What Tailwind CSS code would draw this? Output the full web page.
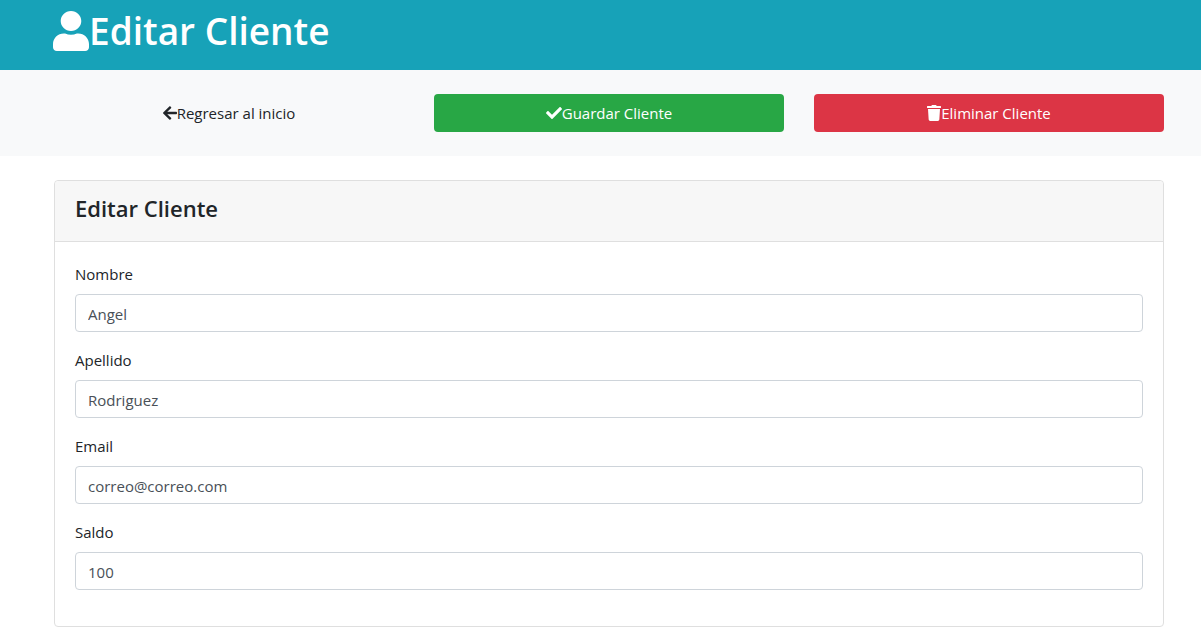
<!DOCTYPE html>
<html lang="es">
<head>
<meta charset="utf-8">
<meta name="viewport" content="width=device-width, initial-scale=1">
<title>Editar Cliente</title>
<script src="https://cdn.jsdelivr.net/npm/@tailwindcss/browser@4"></script>
</head>
<body class="bg-white font-['Open_Sans','Noto_Sans',sans-serif] text-[15px] leading-6 text-[#212529]">
<header class="bg-[#17a2b8] pt-[7px] pb-[15px] pr-[37px] pl-[53px] text-white">
  <h1 class="flex items-center text-[37px] leading-12 font-semibold">
    <svg class="h-10 w-9 shrink-0" viewBox="0 0 448 512" preserveAspectRatio="none" fill="currentColor" aria-hidden="true"><path d="M224 256c70.7 0 128-57.3 128-128S294.7 0 224 0 96 57.3 96 128s57.3 128 128 128zm89.6 32h-16.7c-22.2 10.2-46.9 16-72.9 16s-50.6-5.8-72.9-16h-16.7C60.2 288 0 348.2 0 422.4V464c0 26.5 21.5 48 48 48h352c26.5 0 48-21.5 48-48v-41.6c0-74.2-60.2-134.4-134.4-134.4z"/></svg>
    Editar Cliente
  </h1>
</header>
<form>
  <section class="grid grid-cols-3 gap-[30px] bg-[#f8f9fa] py-6 pr-[37px] pl-[54px]">
    <a href="#" class="flex h-[38px] items-center justify-center rounded">
      <svg class="h-4 w-3.5 shrink-0" viewBox="0 0 448 512" fill="currentColor" aria-hidden="true"><path d="M257.5 445.1l-22.2 22.2c-9.4 9.4-24.6 9.4-33.9 0L7 273c-9.4-9.4-9.4-24.6 0-33.9L201.4 44.7c9.4-9.4 24.6-9.4 33.9 0l22.2 22.2c9.5 9.5 9.3 25-.4 34.3L136.6 216H424c13.3 0 24 10.7 24 24v32c0 13.3-10.7 24-24 24H136.6l120.5 114.8c9.8 9.3 10 24.8.4 34.3z"/></svg>
      Regresar al inicio
    </a>
    <button type="submit" class="flex h-[38px] items-center justify-center rounded bg-[#28a745] text-white">
      <svg class="size-4 shrink-0" viewBox="0 0 512 512" fill="currentColor" aria-hidden="true"><path d="M173.898 439.404l-166.4-166.4c-9.997-9.997-9.997-26.206 0-36.204l36.203-36.204c9.997-9.998 26.207-9.998 36.204 0L192 312.69 432.095 72.596c9.997-9.997 26.207-9.997 36.204 0l36.203 36.204c9.997 9.997 9.997 26.206 0 36.204l-294.4 294.401c-9.998 9.997-26.207 9.997-36.204-.001z"/></svg>
      Guardar Cliente
    </button>
    <button type="button" class="flex h-[38px] items-center justify-center rounded bg-[#dc3545] text-white">
      <svg class="h-4 w-3.5 shrink-0" viewBox="0 0 448 512" fill="currentColor" aria-hidden="true"><path d="M432 32H312l-9.4-18.7A24 24 0 0 0 281.1 0H166.8a23.72 23.72 0 0 0-21.4 13.3L136 32H16A16 16 0 0 0 0 48v32a16 16 0 0 0 16 16h416a16 16 0 0 0 16-16V48a16 16 0 0 0-16-16zM53.2 467a48 48 0 0 0 47.9 45h245.8a48 48 0 0 0 47.9-45L416 128H32z"/></svg>
      Eliminar Cliente
    </button>
  </section>
  <main class="pt-6 pr-[37px] pb-2 pl-[54px]">
    <div class="rounded border border-[#dfdfdf]">
      <div class="rounded-t border-b border-[#dfdfdf] bg-[#f7f7f7] px-5 pt-[13px] pb-[19px]">
        <h2 class="text-[22px] leading-7 font-semibold">Editar Cliente</h2>
      </div>
      <div class="flex flex-col gap-4 px-5 pt-5 pb-9">
        <div>
          <label for="nombre" class="mb-2 block">Nombre</label>
          <input id="nombre" type="text" value="Angel" class="block h-[38px] w-full rounded border border-[#ced4da] bg-white px-3 pt-0.5 text-[#495057]">
        </div>
        <div>
          <label for="apellido" class="mb-2 block">Apellido</label>
          <input id="apellido" type="text" value="Rodriguez" class="block h-[38px] w-full rounded border border-[#ced4da] bg-white px-3 pt-0.5 text-[#495057]">
        </div>
        <div>
          <label for="email" class="mb-2 block">Email</label>
          <input id="email" type="email" value="correo@correo.com" class="block h-[38px] w-full rounded border border-[#ced4da] bg-white px-3 pt-0.5 text-[#495057]">
        </div>
        <div>
          <label for="saldo" class="mb-2 block">Saldo</label>
          <input id="saldo" type="text" inputmode="decimal" value="100" class="block h-[38px] w-full rounded border border-[#ced4da] bg-white px-3 pt-0.5 text-[#495057]">
        </div>
      </div>
    </div>
  </main>
</form>
</body>
</html>
